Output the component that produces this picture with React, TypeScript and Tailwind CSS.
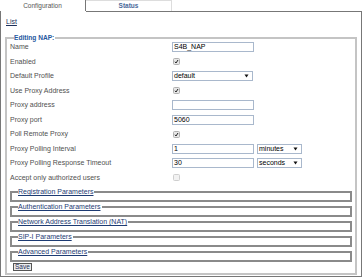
import { ReactNode } from "react"

const font = { fontFamily: '"Liberation Sans", Arial, sans-serif' }

function Check({ disabled }: { disabled?: boolean }) {
    return (
        <span className={`ml-[1px] inline-flex w-[7px] h-[7px] items-center justify-center rounded-[1.5px] border ${disabled ? "border-[#cfcfcf] bg-[#f2f2f2]" : "border-[#b0b0b0] bg-[#e6e6e6]"}`}>
            {!disabled && (
                <svg width="5" height="5" viewBox="0 0 10 10">
                    <path d="M2 5.5 L4 8 L8 2" fill="none" stroke="#222" strokeWidth="2" />
                </svg>
            )}
        </span>
    )
}

function TextBox({ value }: { value?: string }) {
    return (
        <div className="w-[82px] h-[10px] border border-[#a9b8cc] bg-white px-[1px] text-[7px] leading-[8px] text-black">{value}</div>
    )
}

function Select({ value, w }: { value: string; w: string }) {
    return (
        <div className={`${w} h-[10px] border border-[#a9b8cc] bg-white flex items-center justify-between pl-[1px] pr-[3px] text-[7px] leading-[8px] text-black`}>
            <span>{value}</span>
            <svg width="5" height="4" viewBox="0 0 10 8"><path d="M1 1 L9 1 L5 7 Z" fill="#111" /></svg>
        </div>
    )
}

function Row({ label, children }: { label: string; children?: ReactNode }) {
    return (
        <div className="flex items-center h-[14.5px]">
            <div className="w-[162px] text-[7px] text-[#505050]">{label}</div>
            <div className="flex items-center gap-[3px]">{children}</div>
        </div>
    )
}

function Section({ title }: { title: string }) {
    return (
        <fieldset className="mx-[3px] mb-[1px] border-2 border-[#8a8a8a] pb-[4px]">
            <legend className="ml-[6px] pr-[1px] text-[7px] leading-[8px] text-[#1d3b73] underline">{title}</legend>
        </fieldset>
    )
}

export default function App() {
    return (
        <div className="w-[362px] h-[277px] bg-white relative" style={font}>
            <div className="flex h-[11px]">
                <div className="w-[86px] border-r border-[#777] flex items-center justify-center text-[6.5px] text-[#555]">Configuration</div>
                <div className="w-[86px] border-t border-r border-[#ddd] flex items-center justify-center text-[6.5px] font-bold text-[#4a6a9a]">Status</div>
            </div>
            <div className="absolute left-0 top-[11px] w-[362px] h-[266px] border border-[#777] border-t-0">
                <div className="absolute left-[85px] right-[-1px] top-0 h-px bg-[#777]" />
                <div className="pt-[7px] pl-[5px] text-[7px] text-[#1d2f5a] underline leading-[8px]">List</div>
                <fieldset className="mx-[4px] mt-[7px] border-2 border-[#c4c4c4] pl-[3px] pb-[2px]">
                    <legend className="ml-[4px] pr-[1px] text-[6.6px] leading-[9px] font-bold text-[#2557a0]">Editing NAP:</legend>
                    <div className="-mt-[2px]">
                        <Row label="Name"><TextBox value="S4B_NAP" /></Row>
                        <Row label="Enabled"><Check /></Row>
                        <Row label="Default Profile"><Select value="default" w="w-[81px]" /></Row>
                        <Row label="Use Proxy Address"><Check /></Row>
                        <Row label="Proxy address"><TextBox /></Row>
                        <Row label="Proxy port"><TextBox value="5060" /></Row>
                        <Row label="Poll Remote Proxy"><Check /></Row>
                        <Row label="Proxy Polling Interval"><TextBox value="1" /><Select value="minutes" w="w-[45px]" /></Row>
                        <Row label="Proxy Polling Response Timeout"><TextBox value="30" /><Select value="seconds" w="w-[45px]" /></Row>
                        <Row label="Accept only authorized users"><Check disabled /></Row>
                    </div>
                    <div className="-ml-[3px] mt-[3px]">
                        <Section title="Registration Parameters" />
                        <Section title="Authentication Parameters" />
                        <Section title="Network Address Translation (NAT)" />
                        <Section title="SIP-I Parameters" />
                        <Section title="Advanced Parameters" />
                    </div>
                    <button className="block ml-[3px] mt-[1px] h-[8px] px-[1px] border border-[#555] bg-[#eaeaea] text-[6.5px] leading-[6px] text-[#1d2f5a]">Save</button>
                </fieldset>
            </div>
        </div>
    )
}
